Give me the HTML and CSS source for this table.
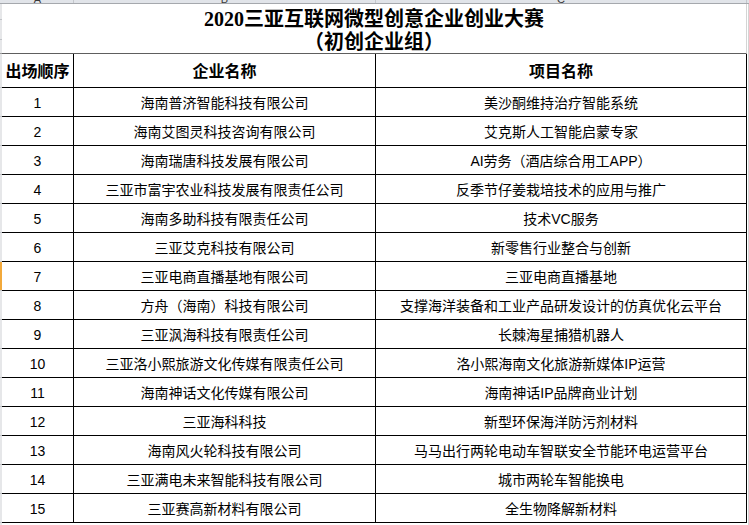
FILE: index.html
```html
<!DOCTYPE html>
<html lang="zh-CN">
<head>
<meta charset="utf-8">
<title>2020三亚互联网微型创意企业创业大赛（初创企业组）</title>
<link rel="stylesheet" href="styles.css">
</head>
<body>
<div class="colhead">
  <div class="ch corner"></div>
  <div class="ch ca"><span>A</span></div>
  <div class="ch cb"><span>B</span></div>
  <div class="ch cc"><span>C</span></div>
  <div class="ch cd"></div>
</div>
<div class="sheet">
  <div class="rowhead">
    <div class="rh t1"></div>
    <div class="rh t2"></div>
    <div class="rh t3"></div>
    <div class="rh hd"></div>
    <div class="rh r"></div>
    <div class="rh r"></div>
    <div class="rh r"></div>
    <div class="rh r"></div>
    <div class="rh r"></div>
    <div class="rh r"></div>
    <div class="rh r sel"></div>
    <div class="rh r"></div>
    <div class="rh r"></div>
    <div class="rh r"></div>
    <div class="rh r"></div>
    <div class="rh r"></div>
    <div class="rh r"></div>
    <div class="rh r"></div>
    <div class="rh r"></div>
  </div>
  <div class="table">
    <div class="title">
      <div class="tline"><span class="num">2020</span>三亚互联网微型创意企业创业大赛</div>
      <div class="tline">（初创企业组）</div>
    </div>
    <div class="row head">
      <div class="cell c1">出场顺序</div>
      <div class="cell c2">企业名称</div>
      <div class="cell c3">项目名称</div>
    </div>
    <div class="row"><div class="cell c1">1</div><div class="cell c2">海南普济智能科技有限公司</div><div class="cell c3">美沙酮维持治疗智能系统</div></div>
    <div class="row"><div class="cell c1">2</div><div class="cell c2">海南艾图灵科技咨询有限公司</div><div class="cell c3">艾克斯人工智能启蒙专家</div></div>
    <div class="row"><div class="cell c1">3</div><div class="cell c2">海南瑞唐科技发展有限公司</div><div class="cell c3">AI劳务（酒店综合用工APP）</div></div>
    <div class="row"><div class="cell c1">4</div><div class="cell c2">三亚市富宇农业科技发展有限责任公司</div><div class="cell c3">反季节仔姜栽培技术的应用与推广</div></div>
    <div class="row"><div class="cell c1">5</div><div class="cell c2">海南多助科技有限责任公司</div><div class="cell c3">技术VC服务</div></div>
    <div class="row"><div class="cell c1">6</div><div class="cell c2">三亚艾克科技有限公司</div><div class="cell c3">新零售行业整合与创新</div></div>
    <div class="row"><div class="cell c1">7</div><div class="cell c2">三亚电商直播基地有限公司</div><div class="cell c3">三亚电商直播基地</div></div>
    <div class="row"><div class="cell c1">8</div><div class="cell c2">方舟（海南）科技有限公司</div><div class="cell c3">支撑海洋装备和工业产品研发设计的仿真优化云平台</div></div>
    <div class="row"><div class="cell c1">9</div><div class="cell c2">三亚沨海科技有限责任公司</div><div class="cell c3">长棘海星捕猎机器人</div></div>
    <div class="row"><div class="cell c1">10</div><div class="cell c2">三亚洛小熙旅游文化传媒有限责任公司</div><div class="cell c3">洛小熙海南文化旅游新媒体IP运营</div></div>
    <div class="row"><div class="cell c1">11</div><div class="cell c2">海南神话文化传媒有限公司</div><div class="cell c3">海南神话IP品牌商业计划</div></div>
    <div class="row"><div class="cell c1">12</div><div class="cell c2">三亚海科科技</div><div class="cell c3">新型环保海洋防污剂材料</div></div>
    <div class="row"><div class="cell c1">13</div><div class="cell c2">海南风火轮科技有限公司</div><div class="cell c3">马马出行两轮电动车智联安全节能环电运营平台</div></div>
    <div class="row"><div class="cell c1">14</div><div class="cell c2">三亚满电未来智能科技有限公司</div><div class="cell c3">城市两轮车智能换电</div></div>
    <div class="row"><div class="cell c1">15</div><div class="cell c2">三亚赛高新材料有限公司</div><div class="cell c3">全生物降解新材料</div></div>
  </div>
  <div class="after"></div>
</div>
</body>
</html>
```
FILE: styles.css
```css
html, body {
  margin: 0;
  padding: 0;
  background: #ffffff;
}
body {
  width: 749px;
  height: 525px;
  overflow: hidden;
  font-family: "Liberation Sans", "Noto Sans CJK SC", sans-serif;
  color: #000;
}
.colhead {
  display: flex;
  height: 3px;
  background: #e1e4e9;
  border-bottom: 1px solid #a5a8ad;
}
.ch {
  height: 3px;
  overflow: hidden;
  display: flex;
  justify-content: center;
  align-items: flex-end;
  border-right: 1px solid #c4c7cc;
  box-sizing: border-box;
}
.ch span {
  font-size: 11px;
  line-height: 11px;
  color: #3a3a3a;
  margin-bottom: -2px;
}
.corner { width: 2px; border-right: none; }
.ca { width: 72px; }
.cb { width: 302px; }
.cc { width: 371px; }
.cd { flex: 1; border-right: none; }

.sheet {
  display: flex;
  align-items: flex-start;
}
.rowhead {
  width: 2px;
  display: flex;
  flex-direction: column;
  background: #e6e7e9;
  height: 521px;
}
.rh {
  box-sizing: border-box;
  border-bottom: 1px solid #c2c4c8;
}
.t1 { height: 16px; }
.t2 { height: 20px; }
.t3 { height: 14px; border-bottom-color: #9a9a9a; }
.hd { height: 34px; }
.r { height: 29px; }
.sel { background: #f2a93b; }

.table {
  width: 745px;
  display: flex;
  flex-direction: column;
}
.title {
  height: 50px;
  box-sizing: border-box;
  padding-top: 3px;
  border-bottom: 1px solid #5e5e5e;
  border-right: 1px solid #d4d4d4;
  text-align: center;
  font-family: "Noto Sans CJK SC", sans-serif;
  font-weight: 700;
  font-size: 20px;
  line-height: 22px;
}
.title .num {
  font-family: "Liberation Serif", serif;
  font-weight: 700;
}
.row {
  display: flex;
  height: 29px;
}
.row.head {
  height: 34px;
}
.cell {
  box-sizing: border-box;
  border-right: 1px solid #000;
  border-bottom: 1px solid #000;
  text-align: center;
  white-space: nowrap;
  font-size: 14px;
  padding-top: 3px;
  line-height: 25px;
}
.head .cell {
  padding-top: 0;
  line-height: 33px;
  font-size: 16px;
  font-weight: 700;
  font-family: "Noto Sans CJK SC", sans-serif;
}
.c1 { width: 72px; }
.c2 { width: 302px; }
.c3 { width: 371px; }

.after {
  width: 1px;
  height: 525px;
  border-right: 1px solid #d4d4d4;
}
```
